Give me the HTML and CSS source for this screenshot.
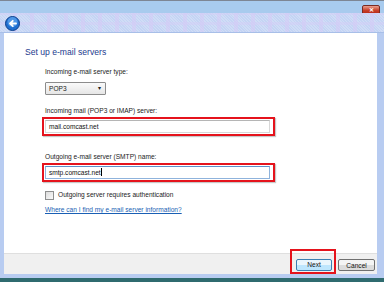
FILE: index.html
```html
<!DOCTYPE html>
<html lang="en">
<head>
    <meta charset="UTF-8">
    <title>Set up e-mail servers</title>
    <link rel="stylesheet" href="styles.css">
</head>
<body>
    <div class="window">
        <div class="titlebar">
            <span class="close-btn">&#x2715;</span>
        </div>
        <div class="chrome">
            <span class="back-btn">
                <svg width="15" height="15" viewBox="0 0 15 15">
                    <circle cx="7.5" cy="7.5" r="7" fill="#1f6fd0" stroke="#0d3f8a" stroke-width="1"/>
                    <circle cx="7.5" cy="6" r="5" fill="#6fb2f5" opacity="0.6"/>
                    <path d="M11 7.5 H5.5 M7.8 4.8 L5 7.5 L7.8 10.2" stroke="#fff" stroke-width="1.8" fill="none" stroke-linecap="round" stroke-linejoin="round"/>
                </svg>
            </span>
        </div>
        <div class="client">
            <div class="content">
                <h1>Set up e-mail servers</h1>

                <div class="label first">Incoming e-mail server type:</div>
                <div class="select">POP3 <span class="arrow">&#9662;</span></div>

                <div class="label">Incoming mail (POP3 or IMAP) server:</div>
                <div class="highlight">
                    <div class="input">mail.comcast.net</div>
                </div>

                <div class="label">Outgoing e-mail server (SMTP) name:</div>
                <div class="highlight">
                    <div class="input focused">smtp.comcast.net<span class="caret"></span></div>
                </div>

                <div class="check-row">
                    <span class="checkbox"></span>
                    <span>Outgoing server requires authentication</span>
                </div>
                <a class="help-link" href="#">Where can I find my e-mail server information?</a>
            </div>
            <div class="footer">
                <div class="btn-highlight">
                    <button class="btn default">Next</button>
                </div>
                <button class="btn">Cancel</button>
            </div>
        </div>
        <div class="bottom-edge"></div>
    </div>
</body>
</html>
```

FILE: styles.css
```css
body {
    margin: 0;
    font-family: "Liberation Sans", Arial, sans-serif;
    color: #222;
}

.window {
    width: 384px;
    height: 282px;
    display: flex;
    flex-direction: column;
    background-color: #b8ccf1;
}

/* タイトルバー */
.titlebar {
    height: 12px;
    border-top: 1px solid #7d8694;
    background-color: #a8cbee;
    display: flex;
    justify-content: flex-end;
    align-items: flex-start;
    padding-right: 4px;
}

.close-btn {
    margin-top: 4px;
    width: 16px;
    height: 8px;
    background: linear-gradient(#e9a08f, #c8402a 55%, #b32a16);
    border: 1px solid #7a2a22;
    border-radius: 2px;
    color: #fff;
    font-size: 6px;
    line-height: 8px;
    text-align: center;
    font-weight: bold;
}

/* 模様の帯 */
.chrome {
    height: 19px;
    padding-left: 5px;
    display: flex;
    align-items: center;
    background-color: #c4d4f4;
    background-image:
        repeating-linear-gradient(90deg, transparent 0 13px, rgba(212, 204, 246, 0.6) 13px 17px),
        repeating-linear-gradient(0deg, transparent 0 7px, rgba(212, 206, 246, 0.5) 7px 10px),
        repeating-linear-gradient(45deg, rgba(255, 255, 255, 0.2) 0 1px, transparent 1px 2px);
    border-bottom: 1px solid #a8bfe8;
}

.back-btn {
    display: flex;
    margin-top: 2px;
}

/* 本体 */
.client {
    flex: 1;
    margin: 0 7px 0 4px;
    display: flex;
    flex-direction: column;
    background-color: #fff;
}

.content {
    flex: 1;
    padding: 13px 0 0 41px;
    font-size: 6.6px;
}

h1 {
    margin: 0 0 0 -20px;
    font-size: 8.6px;
    font-weight: normal;
    line-height: 12px;
    color: #1c3a8e;
}

.label {
    line-height: 10px;
    margin-top: 11px;
    color: #1b1b1b;
}

.label.first {
    margin-top: 9px;
}

.select {
    margin-top: 5px;
    width: 56px;
    height: 11px;
    border: 1px solid #8c8c8c;
    border-radius: 1px;
    background: linear-gradient(#fafafa, #e6e6e6);
    padding-left: 3px;
    line-height: 11px;
    position: relative;
    box-sizing: content-box;
}

.select .arrow {
    position: absolute;
    right: 4px;
    top: 0;
    font-size: 6px;
}

.highlight {
    margin: 2px 0 0 -3px;
    width: 225px;
    border: 2px solid #e5131c;
    padding: 1px 3px 1px 1px;
    box-shadow: 1px 1px 1px #c8c8c8;
}

.input {
    height: 11px;
    border: 1px solid #d8d8d8;
    border-top-color: #b5b5b5;
    padding-left: 3px;
    line-height: 11px;
    color: #111;
}

.input.focused {
    border-color: #8fb3dc;
    border-top-color: #5e8fc9;
}

.caret {
    display: inline-block;
    width: 1px;
    height: 8px;
    background: #000;
    vertical-align: -1px;
}

.label + .highlight {
    margin-top: 1px;
}

.highlight + .label {
    margin-top: 16px;
}

.check-row {
    margin-top: 8px;
    display: flex;
    align-items: center;
    gap: 4px;
    line-height: 10px;
}

.checkbox {
    width: 7px;
    height: 7px;
    border: 1px solid #8e8f8f;
    background: linear-gradient(135deg, #dcdcdc, #fafafa);
}

.help-link {
    display: block;
    margin-top: 5px;
    line-height: 10px;
    color: #1a5fb4;
    text-decoration: underline;
}

/* 下部ボタン */
.footer {
    height: 20px;
    border-top: 1px solid #dfdfdf;
    background-color: #f0f0f0;
    display: flex;
    justify-content: flex-end;
    align-items: flex-end;
    gap: 2px;
    padding-right: 2px;
}

.btn-highlight {
    border: 2px solid #e5131c;
    padding: 2px 2px 1px 4px;
}

.btn {
    width: 37px;
    height: 12px;
    padding: 0;
    font-family: inherit;
    font-size: 6.6px;
    color: #111;
    border: 1px solid #707070;
    border-radius: 2px;
    background: linear-gradient(#f4f4f4 50%, #dcdcdc 50%);
    margin-bottom: 3px;
}

.btn.default {
    width: 36px;
    margin-bottom: 0;
    border-color: #3c7fb1;
    background: linear-gradient(#eaf6fd 50%, #bee6fd 50%);
}

.bottom-edge {
    height: 8px;
    background: linear-gradient(#b8ccf1 0 4px, #2f6b6f 4px);
}
```
